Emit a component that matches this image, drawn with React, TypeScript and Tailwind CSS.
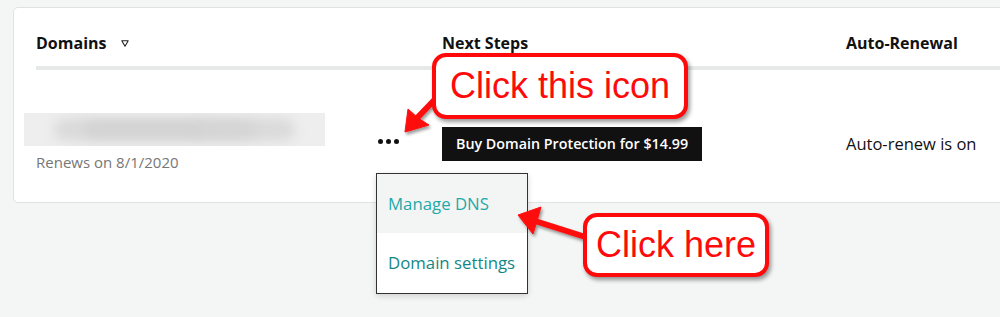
import React from "react";

const sans = { fontFamily: '"Open Sans", "Liberation Sans", sans-serif' };

function SortIcon() {
  return (
    <svg width="8" height="7" viewBox="0 0 8 7" className="ml-[15px] mt-[1px]">
      <path d="M0.8 0.8 H7.2 L4 6.2 Z" fill="none" stroke="#222" strokeWidth="1.1" strokeLinejoin="round" />
    </svg>
  );
}

function Dots() {
  return (
    <div className="flex gap-[3px]">
      <span className="w-[5px] h-[5px] rounded-full bg-[#111]" />
      <span className="w-[5px] h-[5px] rounded-full bg-[#111]" />
      <span className="w-[5px] h-[5px] rounded-full bg-[#111]" />
    </div>
  );
}

function Arrows() {
  return (
    <svg width="1000" height="317" viewBox="0 0 1000 317" className="absolute left-0 top-0 pointer-events-none">
      <defs>
        <filter id="sh" x="-20%" y="-20%" width="160%" height="160%">
          <feDropShadow dx="1.5" dy="2.5" stdDeviation="1.6" floodColor="#000" floodOpacity="0.4" />
        </filter>
      </defs>
      <g filter="url(#sh)" fill="#fe0a0a" stroke="#fe0a0a">
        <line x1="417" y1="118" x2="444" y2="90" strokeWidth="6" />
        <polygon points="405,132 408,109 418,118 429,125" strokeWidth="1" strokeLinejoin="round" />
        <line x1="535" y1="221" x2="595" y2="240" strokeWidth="6" />
        <polygon points="518,215 541,207 537,221 533,234" strokeWidth="1" strokeLinejoin="round" />
      </g>
    </svg>
  );
}

function Callout({ text, className }: { text: string; className: string }) {
  return (
    <div
      className={
        "absolute flex items-center justify-center bg-white border-[4px] border-[#fe0a0a] rounded-[14px] shadow-[2px_3px_4px_rgba(0,0,0,0.4)] text-[#fe0a0a] text-[36px] leading-none " +
        className
      }
      style={{ fontFamily: '"Liberation Sans", Arial, sans-serif' }}
    >
      {text}
    </div>
  );
}

export default function App() {
  return (
    <div className="relative w-[1000px] h-[317px] overflow-hidden bg-[#f4f5f5]" style={sans}>
      <div className="mt-[7px] ml-[13px] w-[1000px] h-[196px] bg-white border border-[#dfe2e2] rounded-l-[5px] pl-[22px]">
        <div className="flex items-center pt-[23px] h-[47px] text-[16px] font-bold text-[#111]">
          <div className="w-[406px] flex items-center">
            Domains
            <SortIcon />
          </div>
          <div className="w-[404px]">Next Steps</div>
          <div>Auto-Renewal</div>
        </div>
        <div className="mt-[11px] h-[4px] bg-[#e7e8e8]" />

        <div className="flex pt-[43px]">
          <div className="w-[406px] flex items-start">
            <div className="w-[342px]">
              <div className="-ml-[12px] w-[301px] h-[33px] bg-[#eeeeee] overflow-hidden relative">
                <div className="absolute left-[30px] right-[30px] top-[5px] bottom-[5px] rounded-full bg-[#dadada] blur-[6px]" />
                <div className="absolute left-[60px] right-[120px] top-[9px] bottom-[9px] rounded-full bg-[#d2d2d2] blur-[6px]" />
                <div className="absolute left-[170px] right-[70px] top-[9px] bottom-[9px] rounded-full bg-[#d4d4d4] blur-[6px]" />
              </div>
              <div className="mt-[6px] text-[15px] leading-[20px] text-[#767676]">Renews on 8/1/2020</div>
            </div>
            <div className="mt-[26px]">
              <Dots />
            </div>
          </div>
          <div className="w-[404px] pt-[14px]">
            <div className="inline-flex items-center h-[34px] px-[14px] bg-[#111] text-white text-[14.3px] font-semibold">
              Buy Domain Protection for $14.99
            </div>
          </div>
          <div className="pt-[19px] text-[16.5px] leading-[24px] text-[#111]">Auto-renew is on</div>
        </div>
      </div>

      <div className="absolute left-[376px] top-[173px] w-[152px] bg-white border border-[#333] shadow-[0_2px_6px_rgba(0,0,0,0.15)] text-[16.8px] whitespace-nowrap">
        <div className="h-[59px] flex items-center pl-[11px] bg-[#f3f5f5] text-[#1fa9a9]">Manage DNS</div>
        <div className="h-[60px] flex items-center pl-[11px] text-[#138787]">Domain settings</div>
      </div>

      <Arrows />
      <Callout text="Click this icon" className="left-[432px] top-[53px] w-[256px] h-[66px]" />
      <Callout text="Click here" className="left-[583px] top-[213px] w-[186px] h-[64px]" />
    </div>
  );
}
